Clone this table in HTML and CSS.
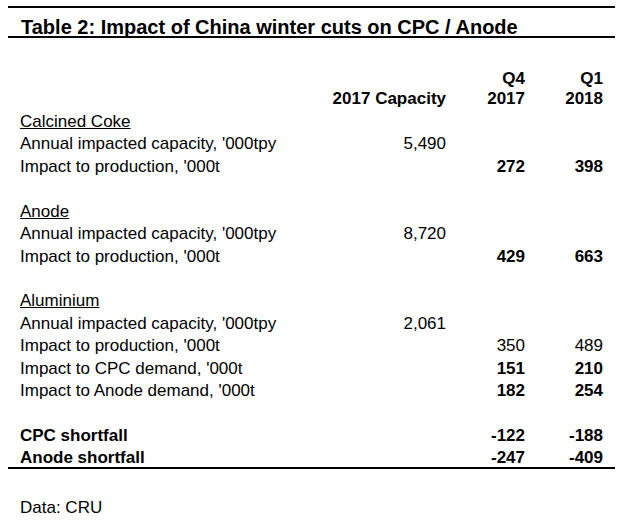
FILE: index.html
```html
<!DOCTYPE html>
<html>
<head>
<meta charset="utf-8">
<link rel="stylesheet" href="styles.css">
</head>
<body>
<div class="title">Table 2: Impact of China winter cuts on CPC / Anode</div>
<div class="table">
  <div class="row head">
    <div></div>
    <div class="num">2017 Capacity</div>
    <div class="num">Q4<br>2017</div>
    <div class="num">Q1<br>2018</div>
  </div>
  <div class="row"><div class="sec">Calcined Coke</div></div>
  <div class="row"><div>Annual impacted capacity, '000tpy</div><div class="num">5,490</div><div></div><div></div></div>
  <div class="row"><div>Impact to production, '000t</div><div></div><div class="num b">272</div><div class="num b">398</div></div>
  <div class="row gap"></div>
  <div class="row"><div class="sec">Anode</div></div>
  <div class="row"><div>Annual impacted capacity, '000tpy</div><div class="num">8,720</div><div></div><div></div></div>
  <div class="row"><div>Impact to production, '000t</div><div></div><div class="num b">429</div><div class="num b">663</div></div>
  <div class="row gap"></div>
  <div class="row"><div class="sec">Aluminium</div></div>
  <div class="row"><div>Annual impacted capacity, '000tpy</div><div class="num">2,061</div><div></div><div></div></div>
  <div class="row"><div>Impact to production, '000t</div><div></div><div class="num">350</div><div class="num">489</div></div>
  <div class="row"><div>Impact to CPC demand, '000t</div><div></div><div class="num b">151</div><div class="num b">210</div></div>
  <div class="row"><div>Impact to Anode demand, '000t</div><div></div><div class="num b">182</div><div class="num b">254</div></div>
  <div class="row gap"></div>
  <div class="row b"><div>CPC shortfall</div><div></div><div class="num">-122</div><div class="num">-188</div></div>
  <div class="row b last"><div>Anode shortfall</div><div></div><div class="num">-247</div><div class="num">-409</div></div>
</div>
<div class="source">Data: CRU</div>
</body>
</html>
```
FILE: styles.css
```css
body {
  margin: 6px 8px;
  background: #fff;
  color: #000;
  font-family: "Liberation Sans", Arial, sans-serif;
  font-size: 17px;
}
.title {
  border-top: 2px solid #000;
  border-bottom: 2px solid #000;
  padding: 8.5px 0 0 13px;
  height: 19.5px;
  line-height: 20px;
  font-size: 20px;
  font-weight: bold;
}
.table {
  margin-top: 31.4px;
  padding: 0 12px;
  border-bottom: 2px solid #000;
}
.row {
  display: grid;
  grid-template-columns: 286px 140px 79px 78px;
  line-height: 22.45px;
  height: 22.45px;
  white-space: nowrap;
}
.row.head {
  line-height: 20px;
  height: 40px;
  margin-bottom: 1.5px;
  font-weight: bold;
  align-items: end;
}
.row.last {
  height: 19.65px;
}
.num {
  text-align: right;
}
.b {
  font-weight: bold;
}
.sec {
  text-decoration: underline;
  text-decoration-thickness: 1px;
}
.source {
  margin-top: 28.3px;
  line-height: 22.45px;
  padding-left: 12px;
}
```
